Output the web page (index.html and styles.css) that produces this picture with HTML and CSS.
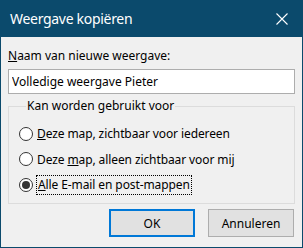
FILE: index.html
```html
<!DOCTYPE html>
<html lang="nl">
<head>
  <meta charset="UTF-8">
  <title>Weergave kopiëren</title>
  <link rel="stylesheet" href="styles.css">
</head>
<body>
  <!-- Dialog window -->
  <div class="dialog">
    <div class="titlebar">
      <span class="title">Weergave kopiëren</span>
      <span class="close">
        <svg width="12" height="12" viewBox="0 0 12 12">
          <path d="M0.5 0.5 L11.5 11.5 M11.5 0.5 L0.5 11.5" stroke="#fff" stroke-width="1.1" fill="none"/>
        </svg>
      </span>
    </div>

    <div class="body">
      <label class="name-label" for="view-name"><u>N</u>aam van nieuwe weergave:</label>
      <input class="name-input" id="view-name" type="text" value="Volledige weergave Pieter">

      <fieldset class="group">
        <legend>Kan worden gebruikt voor</legend>
        <label class="option">
          <input type="radio" name="scope">
          <span><u>D</u>eze map, zichtbaar voor iedereen</span>
        </label>
        <label class="option">
          <input type="radio" name="scope">
          <span>Deze <u>m</u>ap, alleen zichtbaar voor mij</span>
        </label>
        <label class="option">
          <input type="radio" name="scope" checked>
          <span class="focus"><u>A</u>lle E-mail en post-mappen</span>
        </label>
      </fieldset>

      <div class="buttons">
        <button class="btn btn-default">OK</button>
        <button class="btn">Annuleren</button>
      </div>
    </div>
  </div>
</body>
</html>
```

FILE: styles.css
```css
/* Reset */
* {
  margin: 0;
  padding: 0;
  box-sizing: border-box;
}

body {
  font-family: 'Noto Sans', 'Open Sans', sans-serif;
  font-size: 12px;
  color: #000;
  background: #f0f0f0;
}

/* Window frame */
.dialog {
  width: 303px;
  height: 248px;
  display: flex;
  flex-direction: column;
  border: 1px solid #0b4a6c;
  border-top: none;
  background: #f0f0f0;
}

.titlebar {
  height: 37px;
  margin: 0 -1px;
  background: #0b4a6c;
  color: #fff;
  display: flex;
  align-items: center;
  justify-content: space-between;
  padding: 0 15px 0 10px;
}

.title {
  font-size: 14px;
  letter-spacing: -0.3px;
  line-height: 20px;
}

.close {
  display: flex;
  width: 12px;
  height: 12px;
}

/* Content */
.body {
  flex: 1;
  display: flex;
  flex-direction: column;
  padding: 11px 7px 10px 7px;
}

.name-label {
  line-height: 16px;
}

.name-input {
  margin-top: 5px;
  height: 25px;
  border: 1px solid #adadad;
  background: #fff;
  font: inherit;
  padding: 0 3px;
  outline: none;
}

/* Group box */
.group {
  margin-top: 4px;
  border: 1px solid #dcdcdc;
  padding: 7px 0 0 10px;
  height: 106px;
}

.group legend {
  margin-left: 7px;
  padding: 0 1px;
  line-height: 16px;
}

.option {
  display: flex;
  align-items: center;
  height: 25.5px;
  letter-spacing: -0.1px;
}

.option input {
  appearance: none;
  width: 14px;
  height: 14px;
  border: 1px solid #333;
  border-radius: 50%;
  background: #fff;
  margin-right: 4px;
  position: relative;
  flex-shrink: 0;
}

.option input:checked::after {
  content: '';
  position: absolute;
  left: 2px;
  top: 2px;
  width: 8px;
  height: 8px;
  border-radius: 50%;
  background: #333;
}

.option .focus {
  outline: 1px dotted #000;
  outline-offset: 0;
  padding: 0 1px;
  line-height: 18px;
}

/* Buttons */
.buttons {
  margin-top: auto;
  display: flex;
  justify-content: flex-end;
  gap: 13px;
  padding-right: 1px;
}

.btn {
  width: 86px;
  height: 28px;
  border: 1px solid #adadad;
  background: #e1e1e1;
  font: inherit;
  color: #000;
}

.btn-default {
  border: 2px solid #0078d7;
}
```
